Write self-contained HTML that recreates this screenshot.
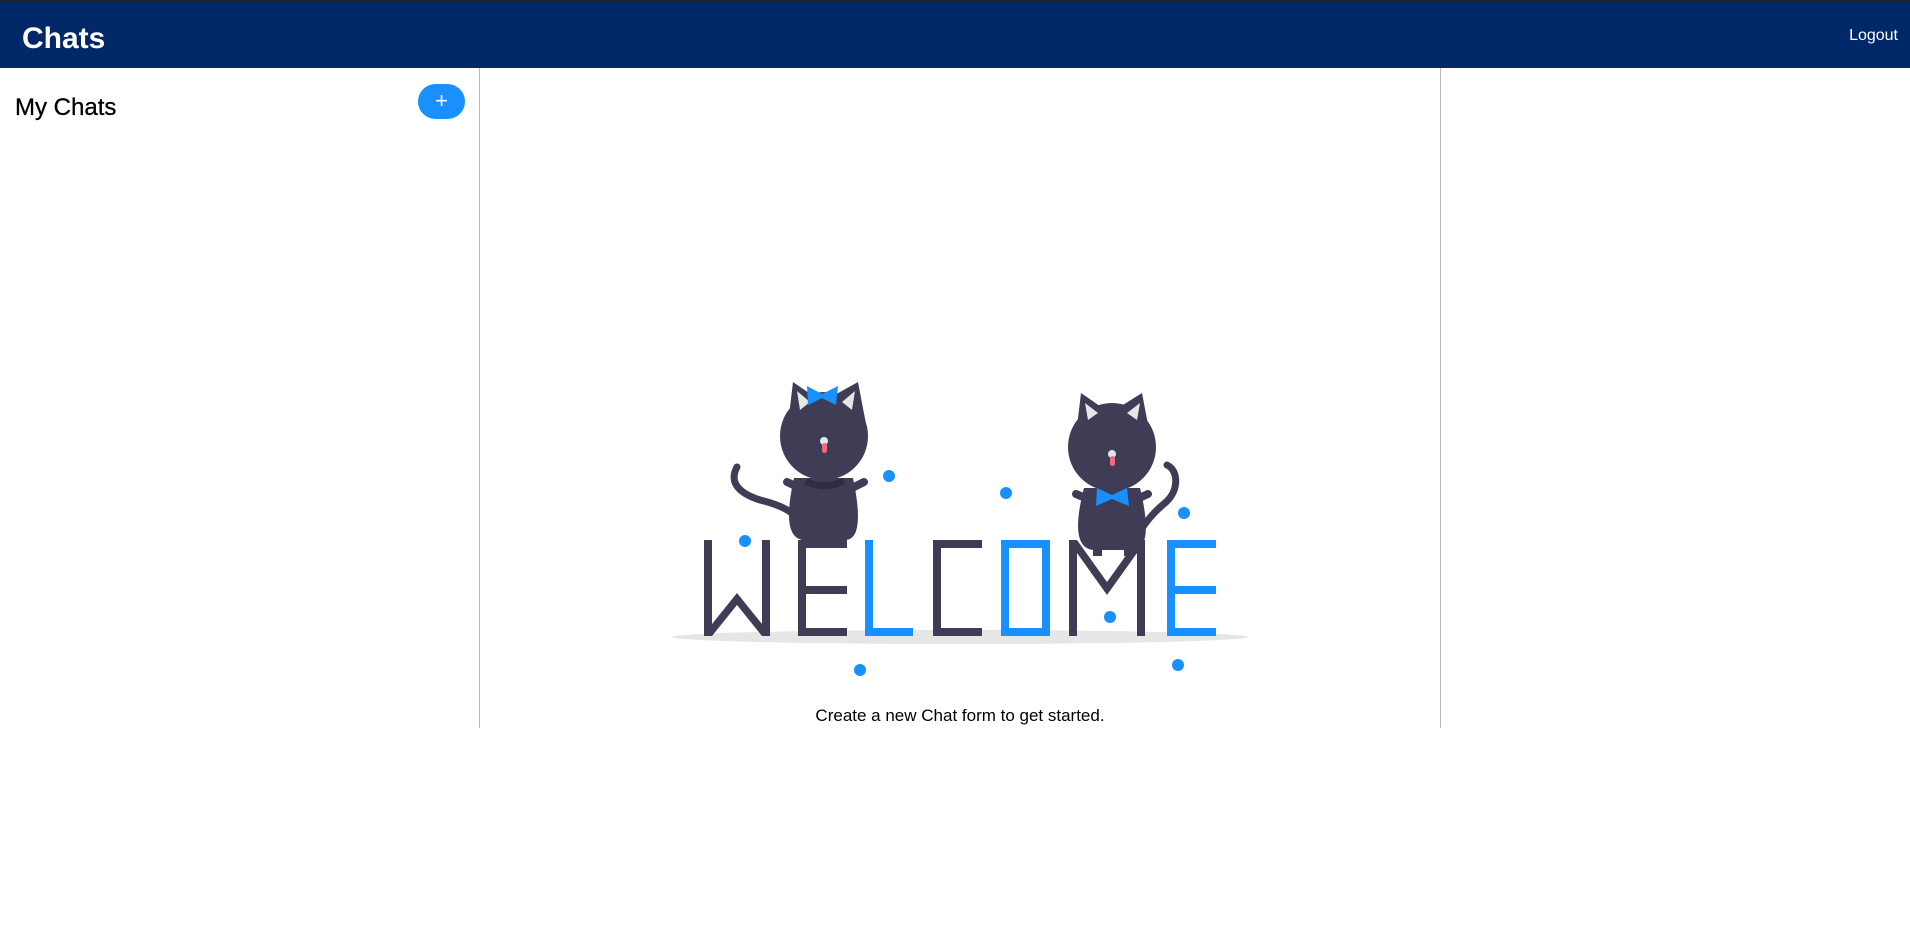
<!DOCTYPE html>
<html><head><meta charset="utf-8"><style>
html,body{margin:0;padding:0;width:1910px;height:934px;background:#fff;font-family:"Segoe UI","Liberation Sans",sans-serif;overflow:hidden;position:relative}
.hdr{position:absolute;left:0;top:0;width:1910px;height:68px;background:#002868;border-top:1px solid #222;box-sizing:border-box}
.hdr .t{position:absolute;left:22px;top:20px;color:#fff;font-weight:bold;font-size:30px;line-height:36px}
.hdr .l{position:absolute;right:12px;top:25px;color:#fff;font-size:16px;line-height:20px}
.v1{position:absolute;left:479px;top:68px;width:1px;height:660px;background:#bbb}
.v2{position:absolute;left:1440px;top:68px;width:1px;height:660px;background:#bbb}
.my{position:absolute;left:15px;top:93px;font-size:24px;line-height:30px;color:#000;-webkit-text-stroke:0.3px #000}
.btn{position:absolute;left:418px;top:84px;width:47px;height:35px;border-radius:18px;background:#1890ff;color:#fff;text-align:center;font-size:22px;line-height:34px}
.msg{position:absolute;left:0;width:1920px;text-align:center;top:705px;font-size:17px;color:#000;line-height:22px}
svg{position:absolute;left:0;top:0}
</style></head><body>
<div class="hdr"><div class="t">Chats</div><div class="l">Logout</div></div>
<div class="v1"></div><div class="v2"></div>
<div class="my">My Chats</div>
<div class="btn">+</div>
<svg width="1910" height="934" viewBox="0 0 1910 934">
<ellipse cx="960" cy="637" rx="288" ry="7" fill="#e6e6e6"/>
<g fill="#3f3d56">
<!-- W -->
<rect x="704" y="540" width="8" height="96"/><rect x="762" y="540" width="8" height="96"/>
<polygon points="712,636 712,624 737,593 762,624 762,636 737,605"/>
<!-- E -->
<rect x="798" y="540" width="8" height="96"/><rect x="798" y="540" width="49" height="8"/><rect x="798" y="586" width="49" height="8"/><rect x="798" y="628" width="49" height="8"/>
<!-- C -->
<rect x="933" y="540" width="8" height="96"/><rect x="933" y="540" width="49" height="8"/><rect x="933" y="628" width="49" height="8"/>
<!-- M -->
<rect x="1069" y="540" width="8" height="96"/><rect x="1137" y="540" width="8" height="96"/>
<polygon points="1077,540 1107,582 1137,540 1137,553 1107,595 1077,553"/>
</g>
<g fill="#1890ff">
<!-- L -->
<rect x="865" y="540" width="8" height="96"/><rect x="865" y="628" width="48" height="8"/>
<!-- O -->
<path d="M1001 540 H1050 V636 H1001 Z M1009 548 V628 H1042 V548 Z" fill-rule="evenodd"/>
<!-- E2 -->
<rect x="1167" y="540" width="8" height="96"/><rect x="1167" y="540" width="49" height="8"/><rect x="1167" y="586" width="49" height="8"/><rect x="1167" y="628" width="49" height="8"/>
</g>
<!-- left cat -->
<g fill="#3f3d56">
<path d="M737 467 C730 480 735 492 760 500 C780 505 790 510 800 520" stroke="#3f3d56" stroke-width="7" fill="none" stroke-linecap="round"/>
<path d="M794 478 Q780 540 805 540 L845 540 Q866 540 853 478 Z"/>
<rect x="801" y="525" width="9" height="16"/><rect x="838" y="525" width="9" height="16"/>
<path d="M787 482 L800 488 M852 488 L864 482" stroke="#3f3d56" stroke-width="8" stroke-linecap="round"/>
<path d="M788 424 L793 382 L822 402 L858 382 L866 424 Z"/>
<circle cx="824" cy="436" r="44"/>
<path d="M797 391 L800 410 L810 402 Z M855 391 L852 410 L842 402 Z" fill="#e6e6e6"/>
<path d="M806 481 Q824 491 844 481" stroke="#2f2e41" stroke-width="7" fill="none"/>
</g>
<path d="M807 386 L822 394 L838 386 L836 405 L822 398 L808 405 Z" fill="#1890ff"/>
<circle cx="824" cy="441" r="4" fill="#e6e6e6"/>
<rect x="822" y="443" width="5" height="10" rx="2.5" fill="#f26b7c"/>
<!-- right cat -->
<g fill="#3f3d56">
<path d="M1167 465 C1178 470 1180 490 1165 503 C1150 515 1140 530 1135 540" stroke="#3f3d56" stroke-width="7" fill="none" stroke-linecap="round"/>
<path d="M1084 488 Q1068 550 1095 550 L1132 550 Q1155 550 1140 488 Z"/>
<path d="M1076 494 L1088 499 M1137 499 L1148 494" stroke="#3f3d56" stroke-width="8" stroke-linecap="round"/>
<path d="M1076 435 L1081 393 L1110 413 L1142 393 L1150 435 Z"/>
<circle cx="1112" cy="447" r="44"/>
<path d="M1085 403 L1088 420 L1098 413 Z M1140 403 L1137 420 L1127 413 Z" fill="#e6e6e6"/>
<rect x="1093" y="548" width="9" height="8"/><rect x="1124" y="548" width="9" height="8"/>
</g>
<path d="M1097 488 L1112 495 L1127 488 L1129 506 L1112 499 L1096 506 Z" fill="#1890ff"/>
<circle cx="1112" cy="454" r="4" fill="#e6e6e6"/>
<rect x="1110" y="456" width="5" height="10" rx="2.5" fill="#f26b7c"/>
<g fill="#1890ff">
<circle cx="889" cy="476" r="6"/><circle cx="745" cy="541" r="6"/><circle cx="1006" cy="493" r="6"/>
<circle cx="1184" cy="513" r="6"/><circle cx="1110" cy="617" r="6"/><circle cx="860" cy="670" r="6"/><circle cx="1178" cy="665" r="6"/>
</g>
</svg>
<div class="msg">Create a new Chat form to get started.</div>
</body></html>
